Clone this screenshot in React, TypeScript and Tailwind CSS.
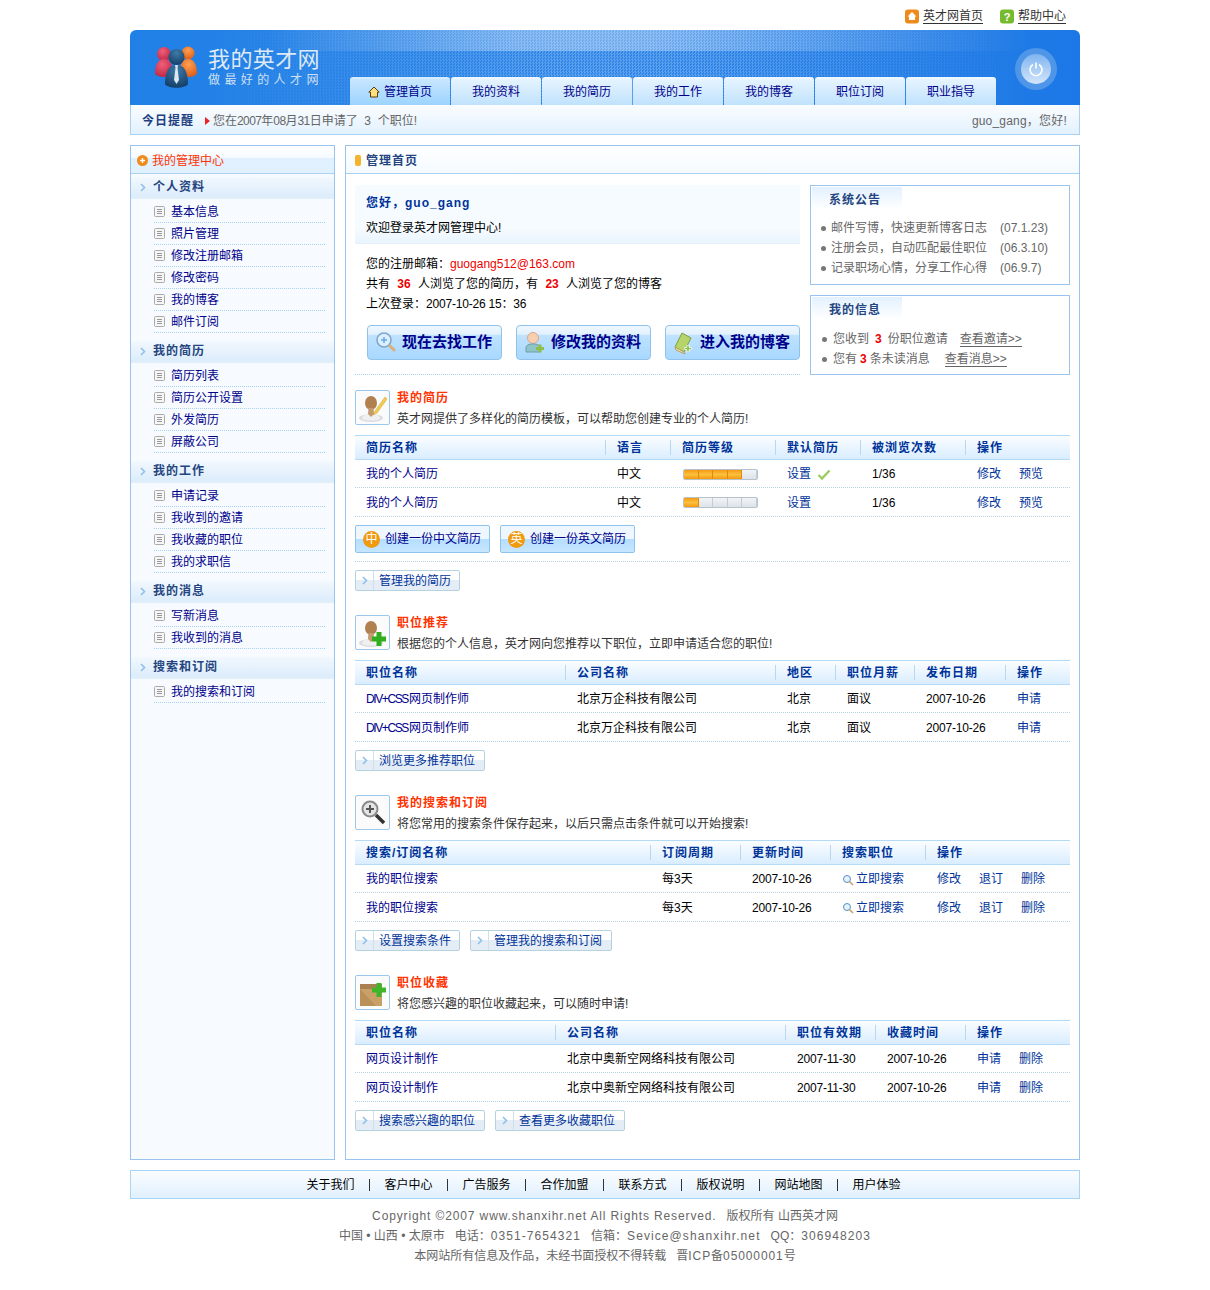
import React from 'react';

const sideGroups = [
  { title: '个人资料', items: ['基本信息', '照片管理', '修改注册邮箱', '修改密码', '我的博客', '邮件订阅'] },
  { title: '我的简历', items: ['简历列表', '简历公开设置', '外发简历', '屏蔽公司'] },
  { title: '我的工作', items: ['申请记录', '我收到的邀请', '我收藏的职位', '我的求职信'] },
  { title: '我的消息', items: ['写新消息', '我收到的消息'] },
  { title: '搜索和订阅', items: ['我的搜索和订阅'] },
];

const tabs = ['我的资料', '我的简历', '我的工作', '我的博客', '职位订阅', '职业指导'];
const footerLinks = ['关于我们', '客户中心', '广告服务', '合作加盟', '联系方式', '版权说明', '网站地图', '用户体验'];

const Chevron = () => (
  <svg width="6" height="9" viewBox="0 0 6 9" fill="none">
    <path d="M1 1l3.5 3.5L1 8" stroke="#8fc0ea" strokeWidth="1.6" />
  </svg>
);

const DocIcon = () => (
  <svg width="11" height="11" viewBox="0 0 11 11" className="shrink-0">
    <rect x="0.5" y="0.5" width="10" height="10" rx="1" fill="#f6f6f6" stroke="#aaaaaa" />
    <path d="M3 3.5h5M3 5.5h5M3 7.5h5" stroke="#999999" />
  </svg>
);

const LinkButton = ({ text, className }: { text: string; className: string }) => (
  <div className={`flex h-[21px] items-stretch border border-[#b4d2e0] rounded-[2px] bg-[linear-gradient(#ffffff_0,#ffffff_48%,#e4edf5_48%,#e4edf5_100%)] ${className}`}>
    <div className="flex w-[18px] items-center justify-center border-r border-[#cfe0ea]">
      <Chevron />
    </div>
    <div className="flex-1 pl-[5px] leading-[20px] whitespace-nowrap text-[#003399]">{text}</div>
  </div>
);

const BigButton = ({ text, icon }: { text: string; icon: React.ReactNode }) => (
  <div className="flex h-[35px] w-[135px] items-center rounded-[4px] border border-[#8fc3ec] bg-[linear-gradient(#eef7ff_0,#e2f1ff_25%,#bfe2ff_28%,#a8d8ff_100%)] pl-[7px]">
    <div className="w-[27px] shrink-0">{icon}</div>
    <span className="text-[15px] font-bold text-[#00008b] whitespace-nowrap">{text}</span>
  </div>
);

const CreateButton = ({ mark, text }: { mark: string; text: string }) => (
  <div className="flex h-[28px] w-[135px] items-center border border-[#8fc3ec] rounded-[2px] bg-[linear-gradient(#eef7ff_0,#eef7ff_50%,#b4deff_50%,#c6e6ff_100%)] pl-[7px]">
    <span className="flex h-[17px] w-[17px] items-center justify-center rounded-full bg-[#f09a10] text-[12px] leading-none text-white">{mark}</span>
    <span className="ml-[5px] whitespace-nowrap text-[#00008b]">{text}</span>
  </div>
);

const SectionHead = ({ icon, title, desc }: { icon: React.ReactNode; title: string; desc: string }) => (
  <div className="flex h-[35px]">
    <div className="flex h-[35px] w-[35px] items-center justify-center rounded-[2px] border border-[#9cc8ee] bg-[#fbfbfb]">{icon}</div>
    <div className="ml-[7px] pt-[1px]">
      <div className="h-[14px] leading-[14px] font-bold tracking-[1px] text-[#ff3300]">{title}</div>
      <div className="mt-[7px] h-[14px] leading-[14px] text-[#333333]">{desc}</div>
    </div>
  </div>
);

const Table = ({ cols, head, rows }: { cols: string; head: string[]; rows: React.ReactNode[][] }) => (
  <div className="mt-[10px]">
    <div className={`grid h-[25px] items-center border-y border-[#b5daf5] bg-[linear-gradient(#fbfdff,#d9edff)] ${cols}`}>
      {head.map((h, i) => (
        <div key={i} className={`h-[15px] pl-[11px] leading-[17px] font-bold tracking-[1px] text-[#003399] ${i < head.length - 1 ? 'border-r border-[#b9d8ef]' : ''}`}>{h}</div>
      ))}
    </div>
    {rows.map((row, r) => (
      <div key={r} className={`grid items-center border-b border-dotted border-[#b4d3e6] pt-[1px] ${r === 0 ? 'h-[28px]' : 'h-[29px]'} ${cols}`}>
        {row.map((c, i) => (
          <div key={i} className="pl-[11px] whitespace-nowrap">{c}</div>
        ))}
      </div>
    ))}
  </div>
);

const Level = ({ on }: { on: number }) => (
  <div className="ml-[1px] flex h-[11px] w-[75px] overflow-hidden rounded-[2px] border border-[#b6c2cc]">
    {[0, 1, 2, 3, 4].map((i) => (
      <div
        key={i}
        className={i < on
          ? 'flex-1 border-r border-[#e58a00] bg-[linear-gradient(#f59a10,#fbc040_50%,#f29a10)]'
          : 'flex-1 border-r border-[#c4ccd4] bg-[linear-gradient(#f2f4f6,#dde3ea)]'}
      />
    ))}
  </div>
);

const Blue = ({ children }: { children: React.ReactNode }) => <span className="text-[#00008b]">{children}</span>;
const Act = ({ children, className }: { children: React.ReactNode; className?: string }) => (
  <span className={`text-[#003399] ${className || ''}`}>{children}</span>
);
const DateText = ({ children }: { children: React.ReactNode }) => <span className="tracking-[-0.2px]">{children}</span>;
const JobName = () => (
  <Blue>
    <span className="tracking-[-1.4px]">DIV+CSS</span><span className="ml-[1px]">网页制作师</span>
  </Blue>
);

// brown head on pale shoulders, shared by the resume and job icons
const Bust = () => (
  <>
    <ellipse cx="13" cy="25" rx="12" ry="4" fill="#dcdde2" />
    <path d="M4 26c1-5 5-6 9-6s8 1 9 6c-5 2-13 2-18 0z" fill="#f0f0f3" />
    <ellipse cx="13" cy="10" rx="6" ry="7" fill="#b08050" />
    <path d="M10.500 15h5l.5 6-3 3-3-3z" fill="#c49a70" />
  </>
);

const MiniSearch = () => (
  <svg width="12" height="12" viewBox="0 0 12 12" className="mr-[2px] inline-block">
    <circle cx="5" cy="5" r="3.5" fill="#e4f2ff" stroke="#5a8fc0" />
    <path d="M7.5 7.5l3.5 3.5" stroke="#c9a070" strokeWidth="1.6" />
  </svg>
);

const Check = () => (
  <svg width="14" height="11" viewBox="0 0 14 11" className="ml-[6px] inline-block">
    <path d="M1.5 6l3.5 3.5L12.5 1.5" fill="none" stroke="#9ccb5e" strokeWidth="2.4" />
  </svg>
);

export default function App() {
  return (
    <div className="min-h-[1290px] bg-white text-[12px] text-black font-['Liberation_Sans','Noto_Sans_CJK_SC',sans-serif]">
      <div className="mx-auto w-[950px]">
        {/* top links */}
        <div className="flex h-[30px] items-center justify-end pr-[14px] pt-[3px] text-[#333333]">
          <svg width="15" height="15" viewBox="0 0 15 15" className="mr-[3px]">
            <rect width="14" height="14" y="0.5" rx="3" fill="#ee8a1c" />
            <path d="M7 3L2.5 7.5H4v3.5h6V7.5h1.5z" fill="#ffffff" />
          </svg>
          <span className="border-b border-[#333333] leading-[13px]">英才网首页</span>
          <svg width="15" height="15" viewBox="0 0 15 15" className="ml-[17px] mr-[3px]">
            <rect width="14" height="14" y="0.5" rx="3" fill="#76bb2e" />
            <text x="7" y="11.5" textAnchor="middle" fontSize="11" fontWeight="bold" fill="#ffffff">?</text>
          </svg>
          <span className="border-b border-[#333333] leading-[13px]">帮助中心</span>
        </div>

        {/* header */}
        <div className="relative flex h-[75px] overflow-hidden rounded-t-[6px] bg-[linear-gradient(90deg,#2080e6,#2f86e8_50%,#1c78e6)]">
          <div className="absolute inset-0 bg-[repeating-conic-gradient(#ffffff38_0_25%,transparent_0_50%)] bg-[length:3px_3px] [mask-image:linear-gradient(90deg,transparent_8%,black_45%,black_60%,transparent_95%)]" />
          <div className="absolute inset-x-0 top-0 h-[21px] bg-[#ffffff50] [mask-image:linear-gradient(90deg,transparent_14%,black_40%,black_55%,transparent_95%)]" />
          <div className="relative flex w-[220px] shrink-0 pl-[24px] pt-[16px]">
            <svg width="46" height="44" viewBox="0 0 46 44">
              <defs>
                <radialGradient id="logoRed" cx="0.4" cy="0.3" r="0.8">
                  <stop offset="0" stopColor="#f0607a" />
                  <stop offset="1" stopColor="#b8203f" />
                </radialGradient>
                <radialGradient id="logoOrange" cx="0.5" cy="0.3" r="0.8">
                  <stop offset="0" stopColor="#ffa050" />
                  <stop offset="1" stopColor="#d9530f" />
                </radialGradient>
                <radialGradient id="logoBlue" cx="0.5" cy="0.25" r="0.8">
                  <stop offset="0" stopColor="#3f7aa8" />
                  <stop offset="1" stopColor="#123c66" />
                </radialGradient>
              </defs>
              <circle cx="10" cy="8" r="7" fill="url(#logoRed)" />
              <path d="M1 28C1 17 5 13 10 13s9 4 9 15c-4 4-14 4-18 0z" fill="url(#logoRed)" />
              <circle cx="34" cy="7" r="6.500" fill="url(#logoOrange)" />
              <path d="M26 28c0-11 3-15 8-15s9 4 9 15c-4 4-13 4-17 0z" fill="url(#logoOrange)" />
              <circle cx="22.500" cy="11" r="8" fill="url(#logoBlue)" />
              <path d="M11 38c0-14 5-19 11.500-19S34 24 34 38c-3 5-20 5-23 0z" fill="url(#logoBlue)" />
              <path d="M21 19h3l-.5 3 1.500 12-2.500 4-2.500-4 1.500-12z" fill="#dbe8f2" />
            </svg>
            <div className="ml-[8px]">
              <div className="pt-[1px] text-[22px] leading-[26px] tracking-[0.4px] text-[#dfe9f5]">我的英才网</div>
              <div className="whitespace-nowrap leading-[15px] tracking-[4.4px] text-[#cfe0f2]">做最好的人才网</div>
            </div>
          </div>
          <div className="relative flex h-[28px] gap-[1px] self-end">
            <div className="flex w-[100px] items-center justify-center gap-[4px] rounded-t-[3px] border-t-2 border-[#d6ecff] bg-[linear-gradient(#c8e6ff,#9cd4ff)] text-[#00008b]">
              <svg width="12" height="12" viewBox="0 0 12 12">
                <path d="M6 1L.8 6.200H2.500V11h7V6.200h1.700z" fill="#ffdf80" stroke="#5a3c08" />
              </svg>
              管理首页
            </div>
            {tabs.map((t) => (
              <div key={t} className="flex w-[90px] items-center justify-center rounded-t-[3px] border-t-2 border-[#eef7ff] bg-[linear-gradient(#e6f4ff,#c0e2fd)] text-[#00008b]">{t}</div>
            ))}
          </div>
          <div className="relative ml-auto mr-[23px] mt-[18px] flex h-[42px] w-[42px] items-center justify-center rounded-full bg-[#4f96e8]">
            <div className="flex h-[30px] w-[30px] items-center justify-center rounded-full bg-[linear-gradient(#7fb4f0,#d4e6fb)]">
              <svg width="16" height="16" viewBox="0 0 16 16" fill="none" stroke="#ffffff" strokeWidth="1.6">
                <path d="M5 3.500a6 6 0 1 0 6 0M8 1.500v6" />
              </svg>
            </div>
          </div>
        </div>

        {/* reminder bar */}
        <div className="flex h-[30px] items-center border-x border-b border-[#a9d1f2] bg-[linear-gradient(#fbfdff,#e2f1fe)] pl-[11px] pr-[12px] pt-[2px]">
          <span className="font-bold tracking-[1px] text-[#1f3f80]">今日提醒</span>
          <svg width="5" height="8" viewBox="0 0 5 8" className="ml-[11px] mr-[3px]">
            <path d="M0 0l5 4-5 4z" fill="#ee2222" />
          </svg>
          <span className="text-[#666666]">您在<span className="tracking-[-0.6px]">2007</span>年<span className="tracking-[-0.6px]">08</span>月<span className="tracking-[-0.6px]">31</span>日申请了&nbsp; 3 &nbsp;个职位!</span>
          <span className="ml-auto tracking-[0.2px] text-[#666666]">guo_gang，您好!</span>
        </div>

        {/* body */}
        <div className="mt-[10px] flex h-[1015px] gap-[10px]">
          {/* sidebar */}
          <div className="w-[205px] shrink-0 border border-[#9ac4ee] bg-[#f7fbff]">
            <div className="flex h-[28px] items-center border-b border-[#a9d1f2] bg-[linear-gradient(#ffffff_0,#f4faff_45%,#e0f0ff_45%,#e2f1ff_100%)] pl-[6px] pt-[2px] text-[#ff3300]">
              <svg width="11" height="11" viewBox="0 0 11 11" className="mr-[4px]">
                <circle cx="5.500" cy="5.500" r="5.500" fill="#f08a1a" />
                <path d="M3 5.500h5M5.500 3v5" stroke="#ffffff" strokeWidth="1.4" />
              </svg>
              我的管理中心
            </div>
            <div className="pt-[3px]">
              {sideGroups.map((g) => (
                <div key={g.title} className="mb-[8px]">
                  <div className="flex h-[22px] items-center border-b-2 border-[#e0eefa] bg-[linear-gradient(#f2f8fe,#dcecfb)] pl-[9px]">
                    <Chevron />
                    <span className="ml-[7px] font-bold tracking-[1px] text-[#24457f]">{g.title}</span>
                  </div>
                  <div className="mt-[2px] px-[23px] pr-[9px]">
                    {g.items.map((it) => (
                      <div key={it} className="flex h-[22px] items-center border-b border-dotted border-[#a9d1f2] text-[#00008b]">
                        <DocIcon />
                        <span className="ml-[6px]">{it}</span>
                      </div>
                    ))}
                  </div>
                </div>
              ))}
            </div>
          </div>

          {/* main */}
          <div className="w-[735px] shrink-0 border border-[#9ac4ee] bg-white">
            <div className="flex h-[28px] items-center border-b border-[#a9d1f2] bg-[linear-gradient(#ffffff,#f4faff)] pl-[9px] pt-[2px]">
              <span className="mr-[5px] h-[11px] w-[6px] rounded-[2px] bg-[#f4b32a]" />
              <span className="font-bold tracking-[1px] text-[#24457f]">管理首页</span>
            </div>

            <div className="px-[9px] pt-[11px]">
              <div className="flex gap-[10px]">
                <div className="w-[445px] border-b border-dotted border-[#a9d1f2]">
                  <div className="h-[59px] border-b border-[#e4f1fc] bg-[linear-gradient(#f6fbff_0,#f6fbff_75%,#e9f4fe_100%)] pl-[11px] pt-[11px]">
                    <div className="font-bold leading-[15px] tracking-[1px] text-[#003399]">您好，guo_gang</div>
                    <div className="mt-[10px] leading-[15px]">欢迎登录英才网管理中心!</div>
                  </div>
                  <div className="mt-[10px] pl-[11px] leading-[20px]">
                    <div>您的注册邮箱：<span className="text-[#ee0000]">guogang512@163.com</span></div>
                    <div>共有 <b className="mx-[4px] text-[#ee0000]">36</b> 人浏览了您的简历，有 <b className="mx-[4px] text-[#ee0000]">23</b> 人浏览了您的博客</div>
                    <div>上次登录：<DateText>2007-10-26 15：36</DateText></div>
                  </div>
                  <div className="mb-[14px] ml-[12px] mt-[11px] flex gap-[14px]">
                    <BigButton
                      text="现在去找工作"
                      icon={
                        <svg width="22" height="24" viewBox="0 0 22 24">
                          <circle cx="9" cy="9" r="7" fill="#dcefff" stroke="#7aa6cc" strokeWidth="1.5" />
                          <path d="M6 9h6M9 6v6" stroke="#6aa8e0" strokeWidth="1.5" />
                          <path d="M14 14l6 6" stroke="#d8b080" strokeWidth="3" />
                        </svg>
                      }
                    />
                    <BigButton
                      text="修改我的资料"
                      icon={
                        <svg width="22" height="24" viewBox="0 0 22 24">
                          <circle cx="9" cy="7" r="5.500" fill="#f8ceb0" stroke="#d8a888" />
                          <path d="M2 21v-4c0-3 3-4 7-4s7 1 7 4v4z" fill="#8fc4c8" stroke="#6aa0a8" />
                          <path d="M16 13.500v8M12 17.500h8" stroke="#8cc04a" strokeWidth="3" />
                        </svg>
                      }
                    />
                    <BigButton
                      text="进入我的博客"
                      icon={
                        <svg width="22" height="24" viewBox="0 0 22 24">
                          <path d="M9 2l9 5-7 14-9-5z" fill="#b6d46a" stroke="#7f9f3e" />
                          <path d="M2 16l9 5 1 2-9-4z" fill="#f2e2b0" stroke="#b8a060" />
                          <path d="M15 14v7M11.500 17.500h7" stroke="#ffffff" strokeWidth="3" />
                          <path d="M15 14.500v6M12 17.500h6" stroke="#8cc04a" strokeWidth="1.600" />
                        </svg>
                      }
                    />
                  </div>
                </div>

                <div className="w-[260px]">
                  <div className="h-[100px] border border-[#9ac4ee] p-[1px]">
                    <div className="h-[22px] w-[90px] bg-[linear-gradient(#e2f1ff,#ffffff)] pl-[17px] pt-[1px] font-bold leading-[25px] tracking-[1px] text-[#24457f]">系统公告</div>
                    <div className="mt-[9px] pl-[9px] leading-[20px] text-[#666666]">
                      <div className="flex items-center"><span className="mr-[5px] h-[5px] w-[5px] rounded-full bg-[#777777]" />邮件写博，快速更新博客日志<span className="ml-[13px]">(07.1.23)</span></div>
                      <div className="flex items-center"><span className="mr-[5px] h-[5px] w-[5px] rounded-full bg-[#777777]" />注册会员，自动匹配最佳职位<span className="ml-[13px]">(06.3.10)</span></div>
                      <div className="flex items-center"><span className="mr-[5px] h-[5px] w-[5px] rounded-full bg-[#777777]" />记录职场心情，分享工作心得<span className="ml-[13px]">(06.9.7)</span></div>
                    </div>
                  </div>
                  <div className="mt-[10px] h-[80px] border border-[#9ac4ee] p-[1px]">
                    <div className="h-[22px] w-[90px] bg-[linear-gradient(#e2f1ff,#ffffff)] pl-[17px] pt-[1px] font-bold leading-[25px] tracking-[1px] text-[#24457f]">我的信息</div>
                    <div className="mt-[10px] pl-[10px] leading-[20px] text-[#666666]">
                      <div className="flex items-center"><span className="mr-[6px] h-[5px] w-[5px] rounded-full bg-[#777777]" />您收到 <b className="mx-[6px] text-[#ee0000]">3</b> 份职位邀请<span className="ml-[12px] border-b border-[#666666] leading-[14px]">查看邀请&gt;&gt;</span></div>
                      <div className="flex items-center"><span className="mr-[6px] h-[5px] w-[5px] rounded-full bg-[#777777]" />您有 <b className="mx-[3px] text-[#ee0000]">3</b> 条未读消息<span className="ml-[15px] border-b border-[#666666] leading-[14px]">查看消息&gt;&gt;</span></div>
                    </div>
                  </div>
                </div>
              </div>

              {/* resume */}
              <div className="mt-[15px]">
                <SectionHead
                  title="我的简历"
                  desc="英才网提供了多样化的简历模板，可以帮助您创建专业的个人简历!"
                  icon={
                    <svg width="30" height="30" viewBox="0 0 30 30">
                      <Bust />
                      <path d="M27 4L17 18l-2 4 4-2L29 6z" fill="#f0cc50" stroke="#c8a030" strokeWidth="0.5" />
                    </svg>
                  }
                />
                <Table
                  cols="grid-cols-[251px_65px_105px_85px_105px_104px]"
                  head={['简历名称', '语言', '简历等级', '默认简历', '被浏览次数', '操作']}
                  rows={[
                    [<Blue>我的个人简历</Blue>, '中文', <Level on={4} />, <span className="flex items-center"><Act>设置</Act><Check /></span>, '1/36', <><Act>修改</Act><Act className="ml-[18px]">预览</Act></>],
                    [<Blue>我的个人简历</Blue>, '中文', <Level on={1} />, <Act>设置</Act>, '1/36', <><Act>修改</Act><Act className="ml-[18px]">预览</Act></>],
                  ]}
                />
                <div className="mt-[8px] flex gap-[10px]">
                  <CreateButton mark="中" text="创建一份中文简历" />
                  <CreateButton mark="英" text="创建一份英文简历" />
                </div>
                <div className="mt-[8px] border-b border-dotted border-[#b4d3e6]" />
                <div className="mt-[8px] flex">
                  <LinkButton text="管理我的简历" className="w-[105px]" />
                </div>
              </div>

              {/* jobs */}
              <div className="mt-[24px]">
                <SectionHead
                  title="职位推荐"
                  desc="根据您的个人信息，英才网向您推荐以下职位，立即申请适合您的职位!"
                  icon={
                    <svg width="30" height="30" viewBox="0 0 30 30">
                      <Bust />
                      <path d="M21 14v14M14 21h14" stroke="#2fae1e" strokeWidth="5" />
                    </svg>
                  }
                />
                <Table
                  cols="grid-cols-[211px_210px_60px_79px_91px_64px]"
                  head={['职位名称', '公司名称', '地区', '职位月薪', '发布日期', '操作']}
                  rows={[0, 1].map(() => [<JobName />, '北京万企科技有限公司', '北京', '面议', <DateText>2007-10-26</DateText>, <Act>申请</Act>])}
                />
                <div className="mt-[8px] flex">
                  <LinkButton text="浏览更多推荐职位" className="w-[130px]" />
                </div>
              </div>

              {/* searches */}
              <div className="mt-[24px]">
                <SectionHead
                  title="我的搜索和订阅"
                  desc="将您常用的搜索条件保存起来，以后只需点击条件就可以开始搜索!"
                  icon={
                    <svg width="30" height="30" viewBox="0 0 30 30">
                      <circle cx="12" cy="11" r="7.500" fill="#e4e4e4" stroke="#8a8a8a" strokeWidth="2" />
                      <path d="M8 11h8M12 7v8" stroke="#555555" strokeWidth="2" />
                      <path d="M18 17l8 8" stroke="#333333" strokeWidth="3.500" />
                    </svg>
                  }
                />
                <Table
                  cols="grid-cols-[296px_90px_90px_95px_144px]"
                  head={['搜索/订阅名称', '订阅周期', '更新时间', '搜索职位', '操作']}
                  rows={[0, 1].map(() => [
                    <Blue>我的职位搜索</Blue>,
                    '每3天',
                    <DateText>2007-10-26</DateText>,
                    <Act><MiniSearch />立即搜索</Act>,
                    <><Act>修改</Act><Act className="ml-[18px]">退订</Act><Act className="ml-[18px]">删除</Act></>,
                  ])}
                />
                <div className="mt-[8px] flex gap-[10px]">
                  <LinkButton text="设置搜索条件" className="w-[105px]" />
                  <LinkButton text="管理我的搜索和订阅" className="w-[142px]" />
                </div>
              </div>

              {/* favourites */}
              <div className="mt-[24px]">
                <SectionHead
                  title="职位收藏"
                  desc="将您感兴趣的职位收藏起来，可以随时申请!"
                  icon={
                    <svg width="30" height="30" viewBox="0 0 30 30">
                      <path d="M2 6h22v22H2z" fill="#c8a068" />
                      <path d="M2 6h22v5H2z" fill="#a88050" />
                      <path d="M2 11l16 17H2z" fill="#b89058" />
                      <path d="M21 5v14M14 12h14" stroke="#3fb52a" strokeWidth="5" />
                    </svg>
                  }
                />
                <Table
                  cols="grid-cols-[201px_230px_90px_90px_104px]"
                  head={['职位名称', '公司名称', '职位有效期', '收藏时间', '操作']}
                  rows={[0, 1].map(() => [
                    <Blue>网页设计制作</Blue>,
                    '北京中奥新空网络科技有限公司',
                    <DateText>2007-11-30</DateText>,
                    <DateText>2007-10-26</DateText>,
                    <><Act>申请</Act><Act className="ml-[18px]">删除</Act></>,
                  ])}
                />
                <div className="mt-[8px] flex gap-[10px]">
                  <LinkButton text="搜索感兴趣的职位" className="w-[130px]" />
                  <LinkButton text="查看更多收藏职位" className="w-[130px]" />
                </div>
              </div>
            </div>
          </div>
        </div>

        {/* footer */}
        <div className="mt-[10px] flex h-[29px] items-center justify-center border border-[#a9d4f5] bg-[linear-gradient(#fbfdff,#e0f0fe)] pr-[3px]">
          {footerLinks.map((l, i) => (
            <React.Fragment key={l}>
              {i > 0 && <span className="mx-[14.5px] h-[12px] w-[1px] bg-[#333333]" />}
              <span>{l}</span>
            </React.Fragment>
          ))}
        </div>
        <div className="mt-[7px] text-center leading-[20px] text-[#666666]">
          <div><span className="tracking-[0.87px]">Copyright ©2007 www.shanxihr.net All Rights Reserved.</span>&nbsp;&nbsp; 版权所有 山西英才网</div>
          <div>中国 • 山西 • 太原市&nbsp;&nbsp; 电话：<span className="tracking-[1.08px]">0351-7654321</span>&nbsp;&nbsp; 信箱：<span className="tracking-[1.08px]">Sevice@shanxihr.net</span>&nbsp;&nbsp; QQ：<span className="tracking-[1.08px]">306948203</span></div>
          <div>本网站所有信息及作品，未经书面授权不得转载&nbsp;&nbsp; 晋<span className="tracking-[0.9px]">ICP</span>备<span className="tracking-[0.9px]">05000001</span>号</div>
        </div>
      </div>
    </div>
  );
}
